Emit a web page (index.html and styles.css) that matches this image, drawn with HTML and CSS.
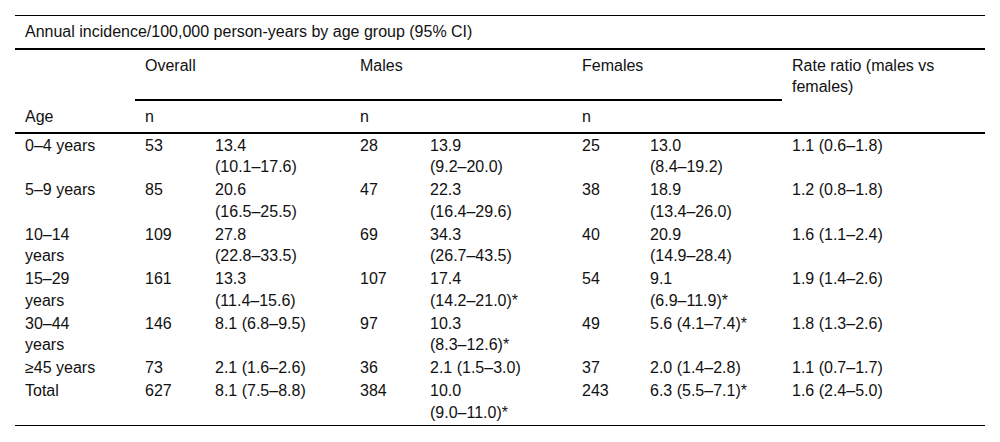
FILE: index.html
```html
<!DOCTYPE html>
<html lang="en">
<head>
<meta charset="utf-8">
<title>Annual incidence by age group</title>
<link rel="stylesheet" href="styles.css">
</head>
<body>
<div class="page">
  <table class="tbl">
    <colgroup>
      <col class="w-age">
      <col class="w-n1">
      <col class="w-r1">
      <col class="w-n2">
      <col class="w-r2">
      <col class="w-n3">
      <col class="w-r3">
      <col class="w-rr">
    </colgroup>
    <thead>
      <tr>
        <th colspan="8" class="title">Annual incidence/100,000 person-years by age group (95% CI)</th>
      </tr>
      <tr>
        <th class="grp-blank"></th>
        <th colspan="2" class="grp">Overall</th>
        <th colspan="2" class="grp">Males</th>
        <th colspan="2" class="grp">Females</th>
        <th rowspan="2" class="ratio">Rate ratio (males vs females)</th>
      </tr>
      <tr>
        <th class="sub">Age</th>
        <th class="sub">n</th>
        <th class="sub"></th>
        <th class="sub">n</th>
        <th class="sub"></th>
        <th class="sub">n</th>
        <th class="sub"></th>
      </tr>
    </thead>
    <tbody class="body">
      <tr>
        <td><span class="nw">0–4</span> years</td><td>53</td><td>13.4 <span class="nw">(10.1–17.6)</span></td><td>28</td><td>13.9 <span class="nw">(9.2–20.0)</span></td><td>25</td><td>13.0 <span class="nw">(8.4–19.2)</span></td><td>1.1 <span class="nw">(0.6–1.8)</span></td>
      </tr>
      <tr>
        <td><span class="nw">5–9</span> years</td><td>85</td><td>20.6 <span class="nw">(16.5–25.5)</span></td><td>47</td><td>22.3 <span class="nw">(16.4–29.6)</span></td><td>38</td><td>18.9 <span class="nw">(13.4–26.0)</span></td><td>1.2 <span class="nw">(0.8–1.8)</span></td>
      </tr>
      <tr>
        <td><span class="nw">10–14</span> years</td><td>109</td><td>27.8 <span class="nw">(22.8–33.5)</span></td><td>69</td><td>34.3 <span class="nw">(26.7–43.5)</span></td><td>40</td><td>20.9 <span class="nw">(14.9–28.4)</span></td><td>1.6 <span class="nw">(1.1–2.4)</span></td>
      </tr>
      <tr>
        <td><span class="nw">15–29</span> years</td><td>161</td><td>13.3 <span class="nw">(11.4–15.6)</span></td><td>107</td><td>17.4 <span class="nw">(14.2–21.0)*</span></td><td>54</td><td>9.1 <span class="nw">(6.9–11.9)*</span></td><td>1.9 <span class="nw">(1.4–2.6)</span></td>
      </tr>
      <tr>
        <td><span class="nw">30–44</span> years</td><td>146</td><td>8.1 <span class="nw">(6.8–9.5)</span></td><td>97</td><td>10.3 <span class="nw">(8.3–12.6)*</span></td><td>49</td><td>5.6 <span class="nw">(4.1–7.4)*</span></td><td>1.8 <span class="nw">(1.3–2.6)</span></td>
      </tr>
      <tr>
        <td>≥45 years</td><td>73</td><td>2.1 <span class="nw">(1.6–2.6)</span></td><td>36</td><td>2.1 <span class="nw">(1.5–3.0)</span></td><td>37</td><td>2.0 <span class="nw">(1.4–2.8)</span></td><td>1.1 <span class="nw">(0.7–1.7)</span></td>
      </tr>
      <tr class="last">
        <td>Total</td><td>627</td><td>8.1 <span class="nw">(7.5–8.8)</span></td><td>384</td><td>10.0 <span class="nw">(9.0–11.0)*</span></td><td>243</td><td>6.3 <span class="nw">(5.5–7.1)*</span></td><td>1.6 <span class="nw">(2.4–5.0)</span></td>
      </tr>
    </tbody>
  </table>
</div>
</body>
</html>
```

FILE: styles.css
```css
html, body {
  margin: 0;
  padding: 0;
  background: #ffffff;
}

.page {
  padding: 15px 15px 0 15px;
}

.tbl {
  width: 970px;
  table-layout: fixed;
  border-collapse: separate;
  border-spacing: 0;
  font-family: "Liberation Sans", Arial, sans-serif;
  font-size: 16px;
  line-height: 21.5px;
  color: #111111;
}

.w-age { width: 120px; }
.w-n1 { width: 70px; }
.w-r1 { width: 145px; }
.w-n2 { width: 70px; }
.w-r2 { width: 152px; }
.w-n3 { width: 68px; }
.w-r3 { width: 142px; }
.w-rr { width: 203px; }

.tbl th,
.tbl td {
  text-align: left;
  vertical-align: top;
  font-weight: normal;
  padding: 0 10px;
}

.nw {
  white-space: nowrap;
}

.tbl .title {
  border-top: 1px solid #000;
  border-bottom: 2px solid #000;
  padding-top: 5px;
  padding-bottom: 5px;
}

.tbl .grp-blank {
  padding-top: 5px;
  padding-bottom: 24.5px;
}

.tbl .grp {
  padding-top: 5px;
  padding-bottom: 22.5px;
  border-bottom: 2px solid #000;
}

.tbl .ratio {
  padding-top: 5px;
  padding-right: 10px;
  border-bottom: 2px solid #000;
}

.tbl .sub {
  padding-top: 5px;
  padding-bottom: 4.5px;
  border-bottom: 2px solid #000;
}

.body td {
  padding-top: 1px;
  padding-bottom: 0.5px;
}

.body td:nth-child(1) { padding-right: 30px; }
.body td:nth-child(3) { padding-right: 35px; }
.body td:nth-child(5) { padding-right: 42px; }
.body td:nth-child(7) { padding-right: 32px; }

.body .last td {
  padding-bottom: 2px;
  border-bottom: 1px solid #000;
}
```
